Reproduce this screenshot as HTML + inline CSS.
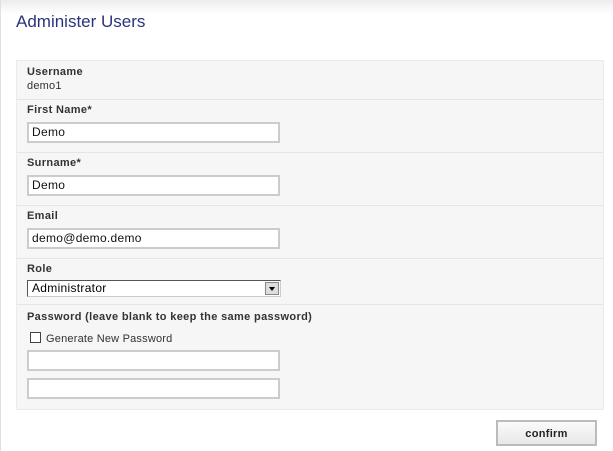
<!DOCTYPE html>
<html><head><style>
body{margin:0;width:613px;height:451px;background:#fff;font-family:"Liberation Sans",Arial,sans-serif;position:relative;overflow:hidden}
.lb{position:absolute;left:0;top:0;width:1px;height:451px;background:#e0e0e0}
.top{position:absolute;left:0;top:0;width:613px;height:14px;background:linear-gradient(#ececec,#fff)}
h1{position:absolute;left:16px;top:12px;margin:0;font-weight:normal;font-size:17px;color:#2d327c}
.panel{position:absolute;left:16px;top:60px;width:586px;height:348px;background:#f6f6f6;border:1px solid #ebebeb}
.sep{position:absolute;left:0;width:586px;height:1px;background:#e6e6e6}
.lab{position:absolute;left:10px;font-size:11px;font-weight:bold;color:#333;letter-spacing:0.35px}
.val{position:absolute;left:10px;font-size:11px;color:#333;letter-spacing:0.2px}
.in{position:absolute;left:10px;width:246px;height:17px;border:2px solid #ccc;background:#fff;font-size:12px;line-height:17px;padding-left:3px;color:#111;box-sizing:content-box;letter-spacing:0.3px}
.sel{position:absolute;left:10px;width:248px;height:15px;border:1px solid #555;border-right-color:#ccc;border-bottom-color:#ccc;background:#fff;font-size:12px;line-height:15px;padding-left:4px;letter-spacing:0.3px}
.arr{position:absolute;right:1px;top:1px;width:14px;height:13px;background:#ddd;border:1px solid #888;box-sizing:border-box}
.arr:after{content:"";position:absolute;left:3px;top:4px;border-left:3px solid transparent;border-right:3px solid transparent;border-top:4px solid #000}
.cb{position:absolute;left:13px;width:9px;height:9px;border:1px solid #444;background:#fff}
.btn{position:absolute;left:496px;top:420px;width:97px;height:22px;border:2px solid #bbb;background:linear-gradient(#fafafa,#e8e8e8);font-size:11px;font-weight:bold;text-align:center;line-height:25px;color:#222;letter-spacing:0.3px}
</style></head><body>
<div class="top"></div><div class="lb"></div>
<h1>Administer Users</h1>
<div class="panel">
<div class="lab" style="top:5px">Username</div>
<div class="val" style="top:19px">demo1</div>
<div class="sep" style="top:38px"></div>
<div class="lab" style="top:43px">First Name*</div>
<div class="in" style="top:61px">Demo</div>
<div class="sep" style="top:91px"></div>
<div class="lab" style="top:96px">Surname*</div>
<div class="in" style="top:114px">Demo</div>
<div class="sep" style="top:144px"></div>
<div class="lab" style="top:149px">Email</div>
<div class="in" style="top:167px">demo@demo.demo</div>
<div class="sep" style="top:197px"></div>
<div class="lab" style="top:202px">Role</div>
<div class="sel" style="top:219px">Administrator<div class="arr"></div></div>
<div class="sep" style="top:243px"></div>
<div class="lab" style="top:250px">Password (leave blank to keep the same password)</div>
<div class="cb" style="top:271px"></div>
<div class="val" style="top:272px;left:29px;color:#333">Generate New Password</div>
<div class="in" style="top:289px"></div>
<div class="in" style="top:317px"></div>
</div>
<div class="btn">confirm</div>
</body></html>
